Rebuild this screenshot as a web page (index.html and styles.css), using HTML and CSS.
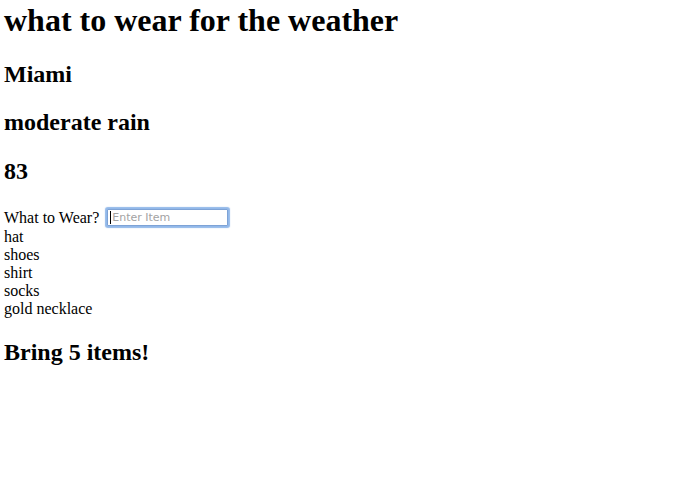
FILE: index.html
```html
<!DOCTYPE html>
<html>
<head>
<meta charset="utf-8">
<link rel="stylesheet" href="styles.css">
</head>
<body>
<h1 class="title">what to wear for the weather</h1>
<h2 class="sub">Miami</h2>
<h2 class="sub">moderate rain</h2>
<h2 class="sub">83</h2>
<div class="form-row">
  <span class="label">What to Wear?</span>
  <span class="input-wrap">
    <input class="item-input" type="text" placeholder="Enter Item">
    <span class="caret"></span>
  </span>
</div>
<div class="items">
  <div class="item">hat</div>
  <div class="item">shoes</div>
  <div class="item">shirt</div>
  <div class="item">socks</div>
  <div class="item">gold necklace</div>
</div>
<h2 class="sub">Bring 5 items!</h2>
</body>
</html>
```
FILE: styles.css
```css
html, body {
  background: #fff;
}
body {
  margin: 0;
  padding: 2px 4px 0 4px;
  font-family: "Liberation Serif", "Times New Roman", serif;
  font-size: 16px;
  color: #000;
}
.title {
  font-size: 32px;
  line-height: 37px;
  font-weight: bold;
  margin: 0 0 20.5px 0;
}
.sub {
  font-size: 24px;
  line-height: 28px;
  font-weight: bold;
  margin: 20.5px 0;
}
.form-row {
  display: flex;
  align-items: flex-start;
  height: 20px;
  line-height: 20px;
  margin-top: 23px;
}
.input-wrap {
  position: relative;
  margin-left: 8px;
  margin-top: 1.5px;
  display: block;
}
.item-input {
  display: block;
  box-sizing: border-box;
  width: 121px;
  height: 17px;
  margin: 0;
  padding: 0 0 0 4px;
  border: 1px solid #7ea3d6;
  box-shadow: 0 0 1px 2px rgba(110, 160, 225, 0.75);
  border-radius: 1px;
  font-family: "DejaVu Sans", "Liberation Sans", sans-serif;
  font-size: 11px;
  outline: none;
  background: #fff;
}
.item-input::placeholder {
  color: #a3a3a3;
}
.caret {
  position: absolute;
  left: 3px;
  top: 2px;
  width: 1px;
  height: 13px;
  background: #000;
}
.item {
  line-height: 18px;
}
```
